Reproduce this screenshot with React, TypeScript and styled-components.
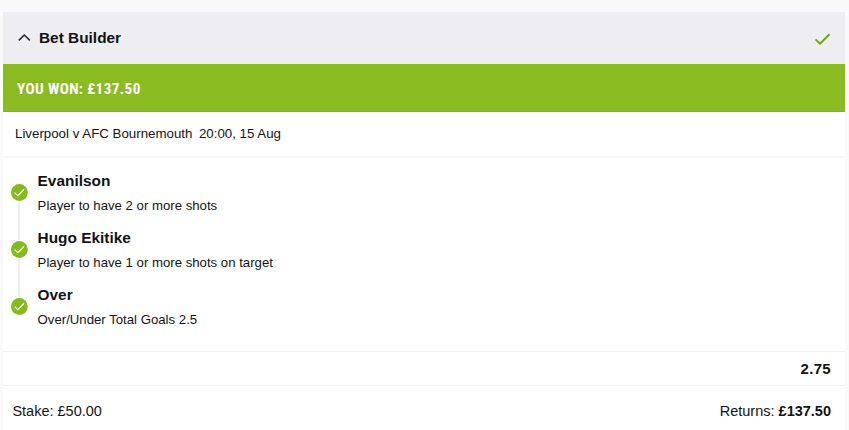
import React from 'react';
import styled, { createGlobalStyle } from 'styled-components';

const GlobalStyle = createGlobalStyle`
  * {
    box-sizing: border-box;
  }
  body {
    margin: 0;
    background: #f9f9f9;
    font-family: 'Liberation Sans', Arial, sans-serif;
    color: #131313;
  }
`;

const Page = styled.div`
  height: 430px;
  padding: 12px 4px 0 3px;
  overflow: hidden;
`;

const Card = styled.section`
  background: #fff;
`;

const Header = styled.header`
  display: flex;
  align-items: center;
  height: 52px;
  padding: 0 14px 0 15px;
  background: #eeedf2;
`;

const Title = styled.h1`
  flex: 1;
  margin: 0 0 1px 8px;
  font-size: 15.4px;
  line-height: 20px;
`;

const WonBanner = styled.div`
  display: flex;
  align-items: center;
  height: 48px;
  padding: 2px 14px 0;
  background: #8abc21;
  border-bottom: 1px solid #7fb50f;
  color: #fff;
`;

const WonText = styled.span`
  font-family: 'Roboto Condensed', Roboto, sans-serif;
  font-size: 15.2px;
  font-weight: 700;
  letter-spacing: 0.38px;
`;

const EventRow = styled.div`
  display: flex;
  align-items: center;
  gap: 6.5px;
  height: 46px;
  padding: 0 12px 1px;
  border-bottom: 2px solid #f7f7f7;
  font-size: 13.3px;
`;

const Selections = styled.ul`
  height: 193px;
  margin: 0;
  padding: 14px 8px 0;
  list-style: none;
`;

const Selection = styled.li`
  display: flex;
  height: 57px;
`;

const Marker = styled.div`
  display: flex;
  flex-direction: column;
  align-items: center;
  width: 17px;
  height: 57px;
  margin: 12px 9.6px 0 0;

  svg {
    flex: none;
  }
`;

const Connector = styled.span`
  flex: 1;
  width: 2px;
  margin: 1px 1px 1px 0;
  background: #eeedf2;
`;

const SelectionName = styled.h2`
  margin: 0;
  font-size: 15.4px;
  line-height: 17px;
`;

const SelectionMarket = styled.p`
  margin: 8px 0 0;
  font-size: 13.2px;
  line-height: 18px;
`;

const OddsRow = styled.div`
  display: flex;
  align-items: center;
  justify-content: flex-end;
  height: 34px;
  padding: 0 14px;
  border-top: 1px solid #f1f1f1;
  font-size: 15px;
  font-weight: 700;
  letter-spacing: 0.3px;
`;

const Footer = styled.footer`
  display: flex;
  align-items: center;
  justify-content: space-between;
  height: 50px;
  padding: 0 14px 0 9.4px;
  border-top: 1px solid #f1f1f1;
  font-size: 14.5px;
`;

const selections = [
  { name: 'Evanilson', market: 'Player to have 2 or more shots' },
  { name: 'Hugo Ekitike', market: 'Player to have 1 or more shots on target' },
  { name: 'Over', market: 'Over/Under Total Goals 2.5' },
];

const ChevronUp = () => (
  <svg width='13' height='10' viewBox='0 0 13 10' fill='none'>
    <path d='M0.8 7.4L6.3 2L11.8 7.4' stroke='#2a2a2a' strokeWidth='1.6' />
  </svg>
);

const CheckIcon = () => (
  <svg width='17' height='14' viewBox='0 0 17 14' fill='none'>
    <path d='M1.5 8.4L6 12.7L15.5 3.2' stroke='#71ab08' strokeWidth='2' />
  </svg>
);

const CheckBadge = () => (
  <svg width='17' height='17' viewBox='0 0 17 17' fill='none'>
    <circle cx='8.4' cy='8.5' r='8.4' fill='#84bb1c' />
    <path d='M3.6 8.6L6.9 11.7L13 5.3' stroke='#fff' strokeWidth='1.2' />
  </svg>
);

const App: React.FC = () => {
  return (
    <>
      <GlobalStyle />
      <Page>
        <Card>
          <Header>
            <ChevronUp />
            <Title>Bet Builder</Title>
            <CheckIcon />
          </Header>
          <WonBanner>
            <WonText>YOU WON: £137.50</WonText>
          </WonBanner>
          <EventRow>
            <span>Liverpool v AFC Bournemouth</span>
            <span>20:00, 15 Aug</span>
          </EventRow>
          <Selections>
            {selections.map((item, index) => (
              <Selection key={item.name}>
                <Marker>
                  <CheckBadge />
                  {index < selections.length - 1 && <Connector />}
                </Marker>
                <div>
                  <SelectionName>{item.name}</SelectionName>
                  <SelectionMarket>{item.market}</SelectionMarket>
                </div>
              </Selection>
            ))}
          </Selections>
          <OddsRow>2.75</OddsRow>
          <Footer>
            <span>Stake: £50.00</span>
            <span>
              Returns: <strong>£137.50</strong>
            </span>
          </Footer>
        </Card>
      </Page>
    </>
  );
};

export default App;
